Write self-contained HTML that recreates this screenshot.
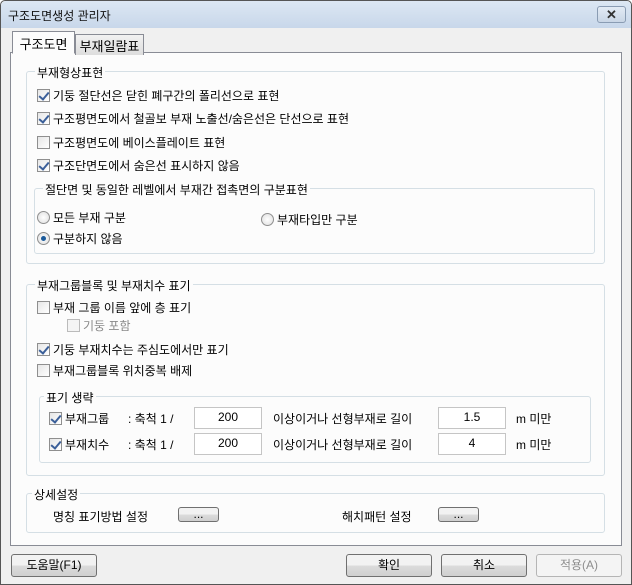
<!DOCTYPE html><html><head><meta charset="utf-8"><style>
*{box-sizing:border-box}
body{margin:0;width:632px;height:585px;overflow:hidden;font-family:"Liberation Sans","Noto Sans CJK KR","NanumGothic",sans-serif;font-size:12px;color:#000}
.win{position:absolute;left:0;top:0;width:632px;height:585px;background:#f0f0f0;border:1px solid #555;border-radius:5px 5px 0 0}
.title{position:absolute;left:0;top:0;width:630px;height:27px;background:linear-gradient(#dce7f3,#c8d7ea);border-radius:5px 5px 0 0}
.title span{position:absolute;left:7px;top:6px;font-size:12px;color:#111}
.close{position:absolute;left:596px;top:5px;width:29px;height:17px;border:1px solid #8a9cb3;border-radius:3px;background:linear-gradient(#e3ebf5,#c9d6e6);text-align:center;font-size:13px;line-height:15px;color:#333;font-weight:bold}
.a{position:absolute;white-space:nowrap}
.tabpage{position:absolute;left:9px;top:51px;width:612px;height:494px;border:1px solid #898c95;background:#fcfcfc}
.tab{position:absolute;height:21px;border:1px solid #898c95;border-bottom:none;padding:2px 0;font-size:13px;white-space:nowrap;text-align:center}
.g{position:absolute;border:1px solid #d5dfe5;border-radius:3px}
.gl{position:absolute;background:#fcfcfc;padding:0 2px;white-space:nowrap}
.cb{position:absolute;width:13px;height:13px;border:1px solid #8f8f8f;background:linear-gradient(135deg,#e6e6e6,#fff)}
.cb.c::after{content:"";position:absolute;left:3px;top:0px;width:4px;height:8px;border:solid #3b5f99;border-width:0 2px 2px 0;transform:rotate(40deg)}
.cb.d{border-color:#bbb;background:#f4f4f4}
.rd{position:absolute;width:13px;height:13px;border:1px solid #8f8f8f;border-radius:50%;background:radial-gradient(#fff,#ddd)}
.rd.s::after{content:"";position:absolute;left:3px;top:3px;width:5px;height:5px;border-radius:50%;background:#1b5a9a}
.inp{position:absolute;height:22px;border:1px solid #c5c5c5;background:#fff;text-align:center;line-height:18px}
.btn{position:absolute;height:23px;border:1px solid #707070;border-radius:3px;background:linear-gradient(#f2f2f2 50%,#dcdcdc 50%,#cfcfcf);text-align:center;line-height:20px}
</style></head><body><div class="win">
<div class="title"><span>구조도면생성 관리자</span><div class="close">✕</div></div>
<div class="tabpage"></div>
<div class="tab" style="left:11px;top:30px;height:23px;background:#fcfcfc;width:63px;border-bottom:1px solid #fcfcfc">구조도면</div>
<div class="tab" style="left:74px;top:33px;width:69px;background:linear-gradient(#f2f2f2,#dedede);padding-top:1px">부재일람표</div>

<div class="g" style="left:25px;top:70px;width:579px;height:193px"></div>
<div class="gl" style="left:34px;top:63px">부재형상표현</div>
<div class="cb c" style="left:36px;top:88px"></div><div class="a" style="left:52px;top:86px">기둥 절단선은 닫힌 폐구간의 폴리선으로 표현</div>
<div class="cb c" style="left:36px;top:111px"></div><div class="a" style="left:52px;top:109px">구조평면도에서 철골보 부재 노출선/숨은선은 단선으로 표현</div>
<div class="cb" style="left:36px;top:135px"></div><div class="a" style="left:52px;top:133px">구조평면도에 베이스플레이트 표현</div>
<div class="cb c" style="left:36px;top:158px"></div><div class="a" style="left:52px;top:156px">구조단면도에서 숨은선 표시하지 않음</div>
<div class="g" style="left:33px;top:187px;width:561px;height:66px"></div>
<div class="gl" style="left:42px;top:180px">절단면 및 동일한 레벨에서 부재간 접촉면의 구분표현</div>
<div class="rd" style="left:36px;top:210px"></div><div class="a" style="left:52px;top:208px">모든 부재 구분</div>
<div class="rd" style="left:260px;top:212px"></div><div class="a" style="left:276px;top:210px">부재타입만 구분</div>
<div class="rd s" style="left:36px;top:231px"></div><div class="a" style="left:52px;top:229px">구분하지 않음</div>

<div class="g" style="left:25px;top:283px;width:579px;height:192px"></div>
<div class="gl" style="left:34px;top:276px">부재그룹블록 및 부재치수 표기</div>
<div class="cb" style="left:36px;top:300px"></div><div class="a" style="left:52px;top:298px">부재 그룹 이름 앞에 층 표기</div>
<div class="cb d" style="left:66px;top:318px"></div><div class="a" style="left:82px;top:316px;color:#8a8a8a">기둥 포함</div>
<div class="cb c" style="left:36px;top:342px"></div><div class="a" style="left:52px;top:340px">기둥 부재치수는 주심도에서만 표기</div>
<div class="cb" style="left:36px;top:363px"></div><div class="a" style="left:52px;top:361px">부재그룹블록 위치중복 배제</div>
<div class="g" style="left:38px;top:395px;width:552px;height:67px"></div>
<div class="gl" style="left:43px;top:388px">표기 생략</div>
<div class="cb c" style="left:48px;top:411px"></div><div class="a" style="left:64px;top:409px">부재그룹</div>
<div class="a" style="left:127px;top:409px">: 축척 1 /</div>
<div class="inp" style="left:193px;top:406px;width:68px">200</div>
<div class="a" style="left:272px;top:409px">이상이거나 선형부재로 길이</div>
<div class="inp" style="left:437px;top:406px;width:68px">1.5</div>
<div class="a" style="left:515px;top:409px">m 미만</div>
<div class="cb c" style="left:48px;top:437px"></div><div class="a" style="left:64px;top:435px">부재치수</div>
<div class="a" style="left:127px;top:435px">: 축척 1 /</div>
<div class="inp" style="left:193px;top:432px;width:68px">200</div>
<div class="a" style="left:272px;top:435px">이상이거나 선형부재로 길이</div>
<div class="inp" style="left:437px;top:432px;width:68px">4</div>
<div class="a" style="left:515px;top:435px">m 미만</div>

<div class="g" style="left:25px;top:492px;width:579px;height:40px"></div>
<div class="gl" style="left:31px;top:485px">상세설정</div>
<div class="a" style="left:52px;top:507px">명칭 표기방법 설정</div>
<div class="btn" style="left:177px;top:506px;width:41px;height:15px;line-height:12px">...</div>
<div class="a" style="left:341px;top:507px">해치패턴 설정</div>
<div class="btn" style="left:437px;top:506px;width:41px;height:15px;line-height:12px">...</div>

<div class="btn" style="left:10px;top:553px;width:86px">도움말(F1)</div>
<div class="btn" style="left:345px;top:553px;width:86px">확인</div>
<div class="btn" style="left:440px;top:553px;width:86px">취소</div>
<div class="btn" style="left:535px;top:553px;width:86px;border-color:#b5b5b5;background:#f4f4f4;color:#8d8d8d">적용(A)</div>
</div></body></html>
